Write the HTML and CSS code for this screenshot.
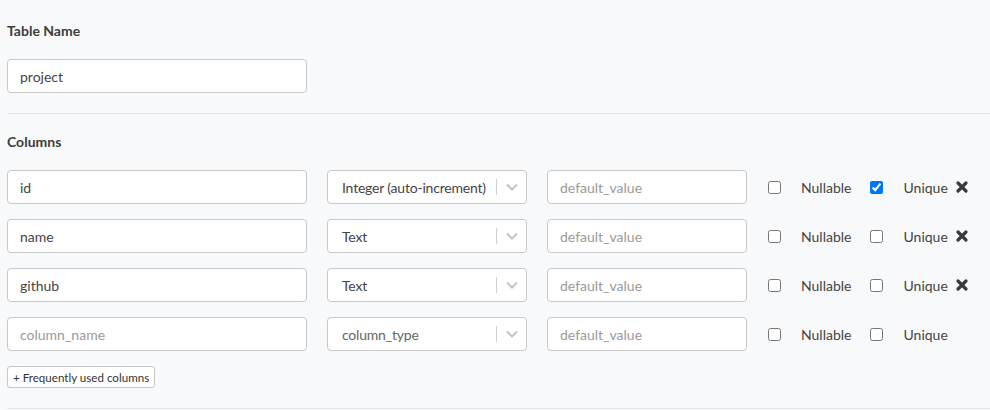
FILE: index.html
```html
<!DOCTYPE html>
<html>
<head>
<meta charset="utf-8">
<link rel="stylesheet" href="styles.css">
</head>
<body>
<div class="page">
  <div class="section">
    <h4 class="heading">Table Name</h4>
    <input class="field field-wide" type="text" value="project">
  </div>
  <hr class="divider">
  <div class="section">
    <h4 class="heading">Columns</h4>
    <div class="rows">
      <div class="row">
        <input class="field field-wide" type="text" value="id">
        <div class="select"><span class="select-value">Integer (auto-increment)</span><span class="sep"></span><svg class="chev" viewBox="0 0 14 10" width="14" height="10"><path d="M2 2.5 L7 7.5 L12 2.5" fill="none" stroke="#c4c4c4" stroke-width="2"/></svg></div>
        <input class="field field-mid" type="text" placeholder="default_value">
        <label class="check"><input type="checkbox"><span>Nullable</span></label>
        <label class="check"><input type="checkbox" checked><span>Unique</span></label>
        <span class="remove"><svg viewBox="0 0 14 14" width="14" height="14"><path d="M3 3 L11 11 M11 3 L3 11" stroke="#3a3a3a" stroke-width="3.2" stroke-linecap="round"/></svg></span>
      </div>
      <div class="row">
        <input class="field field-wide" type="text" value="name">
        <div class="select"><span class="select-value">Text</span><span class="sep"></span><svg class="chev" viewBox="0 0 14 10" width="14" height="10"><path d="M2 2.5 L7 7.5 L12 2.5" fill="none" stroke="#c4c4c4" stroke-width="2"/></svg></div>
        <input class="field field-mid" type="text" placeholder="default_value">
        <label class="check"><input type="checkbox"><span>Nullable</span></label>
        <label class="check"><input type="checkbox"><span>Unique</span></label>
        <span class="remove"><svg viewBox="0 0 14 14" width="14" height="14"><path d="M3 3 L11 11 M11 3 L3 11" stroke="#3a3a3a" stroke-width="3.2" stroke-linecap="round"/></svg></span>
      </div>
      <div class="row">
        <input class="field field-wide" type="text" value="github">
        <div class="select"><span class="select-value">Text</span><span class="sep"></span><svg class="chev" viewBox="0 0 14 10" width="14" height="10"><path d="M2 2.5 L7 7.5 L12 2.5" fill="none" stroke="#c4c4c4" stroke-width="2"/></svg></div>
        <input class="field field-mid" type="text" placeholder="default_value">
        <label class="check"><input type="checkbox"><span>Nullable</span></label>
        <label class="check"><input type="checkbox"><span>Unique</span></label>
        <span class="remove"><svg viewBox="0 0 14 14" width="14" height="14"><path d="M3 3 L11 11 M11 3 L3 11" stroke="#3a3a3a" stroke-width="3.2" stroke-linecap="round"/></svg></span>
      </div>
      <div class="row">
        <input class="field field-wide" type="text" placeholder="column_name">
        <div class="select"><span class="select-value placeholder">column_type</span><span class="sep"></span><svg class="chev" viewBox="0 0 14 10" width="14" height="10"><path d="M2 2.5 L7 7.5 L12 2.5" fill="none" stroke="#c4c4c4" stroke-width="2"/></svg></div>
        <input class="field field-mid" type="text" placeholder="default_value">
        <label class="check"><input type="checkbox"><span>Nullable</span></label>
        <label class="check"><input type="checkbox"><span>Unique</span></label>
      </div>
    </div>
    <button class="btn-small" type="button">+ Frequently used columns</button>
  </div>
  <hr class="divider">
</div>
</body>
</html>
```

FILE: styles.css
```css
html, body {
  margin: 0;
  padding: 0;
  background: #f8f9fa;
  font-family: Lato, "Open Sans", sans-serif;
  color: #333;
}

.page {
  padding-top: 22px;
}

.section {
  padding-left: 7px;
}

.heading {
  margin: 0 0 20px 0;
  font-size: 14px;
  line-height: 17px;
  font-weight: 700;
  color: #3d3d3d;
}

.divider {
  border: 0;
  border-top: 1px solid #e5e7ea;
  margin: 20px 0 19px 7px;
  height: 0;
}

.field {
  box-sizing: border-box;
  height: 34px;
  border: 1px solid #c8c8c8;
  border-radius: 4px;
  background: #fff;
  padding: 0 12px;
  font-family: inherit;
  font-size: 14px;
  color: #444;
  outline: none;
  margin: 0;
}

.field::placeholder {
  color: #9a9a9a;
}

.field-wide { width: 300px; }
.field-mid { width: 200px; }

.rows {
  display: flex;
  flex-direction: column;
  gap: 15px;
}

.row {
  display: flex;
  align-items: center;
  gap: 20px;
  height: 34px;
}

.select {
  box-sizing: border-box;
  width: 200px;
  height: 34px;
  border: 1px solid #c8c8c8;
  border-radius: 4px;
  background: #fff;
  display: flex;
  align-items: center;
  padding-left: 14px;
  font-size: 14px;
  letter-spacing: -0.2px;
  color: #444;
}

.select-value {
  flex: 1;
  white-space: nowrap;
}

.select-value.placeholder {
  color: #666;
}

.sep {
  width: 1px;
  height: 16px;
  background: #d0d0d0;
  margin-right: 8px;
}

.chev {
  margin-right: 7px;
}

.check {
  display: flex;
  align-items: center;
  font-size: 14px;
  color: #444;
  margin-left: 1px;
}

.check + .check {
  margin-left: -1px;
}

.check input {
  width: 13px;
  height: 13px;
  margin: 0 20px 0 0;
}

.remove {
  display: flex;
  align-items: center;
  margin-left: -13px;
}

.btn-small {
  margin-top: 15px;
  height: 22px;
  box-sizing: border-box;
  padding: 0 5px;
  border: 1px solid #c8c8c8;
  border-radius: 3px;
  background: #fff;
  font-family: inherit;
  font-size: 11.6px;
  color: #333;
}
```
